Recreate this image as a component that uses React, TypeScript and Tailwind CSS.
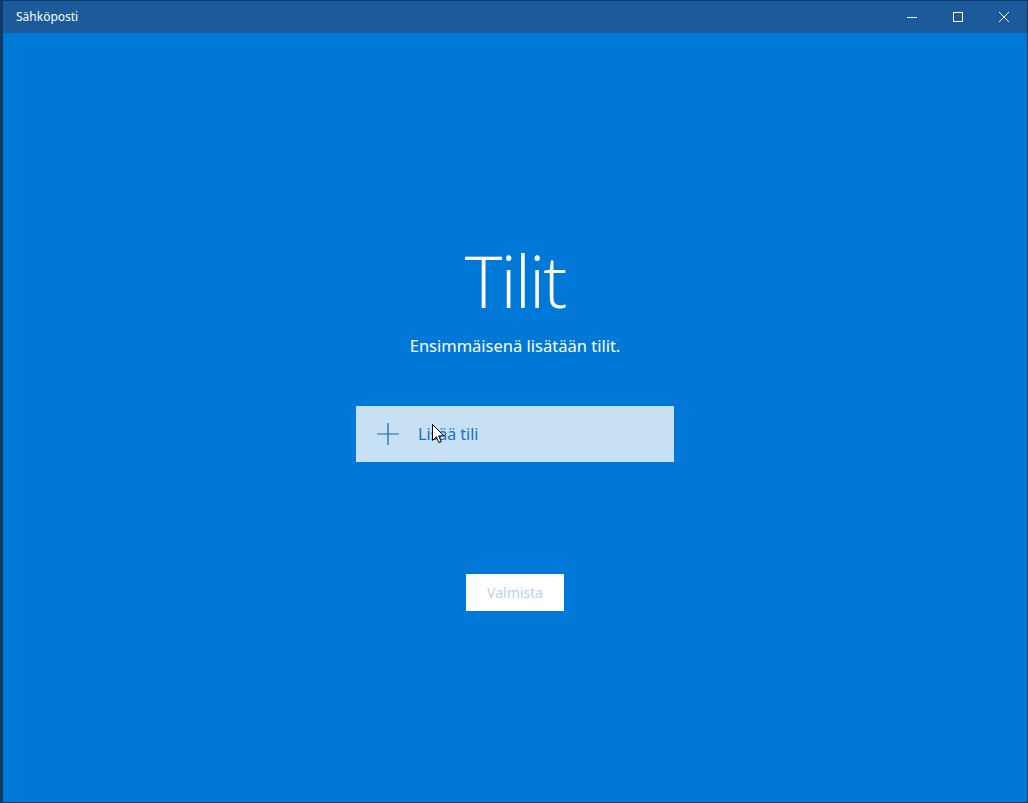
import React from "react";

export default function App() {
  const ui = { fontFamily: '"Segoe UI", "Noto Sans", "Open Sans", sans-serif' };
  return (
    <div className="w-[1028px] h-[803px] bg-[#0f3a66] pl-[3px] pr-[1px] pt-[1px] pb-[1px] flex flex-col" style={ui}>
      <div className="h-[32px] bg-[#1b5a9b] flex items-center shrink-0">
        <div className="pl-[13px] text-[12px] text-white flex-1">Sähköposti</div>
        <div className="flex h-full">
          <div className="w-[46px] h-full flex items-center justify-center">
            <svg width="12" height="12" viewBox="0 0 12 12"><path d="M1 6.5H11" stroke="white" strokeWidth="1" /></svg>
          </div>
          <div className="w-[46px] h-full flex items-center justify-center">
            <svg width="12" height="12" viewBox="0 0 12 12"><rect x="1.5" y="1.5" width="9" height="9" fill="none" stroke="white" strokeWidth="1" /></svg>
          </div>
          <div className="w-[46px] h-full flex items-center justify-center">
            <svg width="12" height="12" viewBox="0 0 12 12"><path d="M1 1L11 11M11 1L1 11" stroke="white" strokeWidth="1" /></svg>
          </div>
        </div>
      </div>
      <div className="flex-1 bg-[#0078d7] flex flex-col items-center">
        <div className="mt-[201px] text-[72px] leading-[92px] tracking-[-2px] text-white font-light" style={{ fontFamily: '"Segoe UI Light", "Open Sans", "Noto Sans", sans-serif', fontWeight: 300 }}>Tilit</div>
        <div className="mt-[9px] text-[16.5px] leading-[22px] text-white">Ensimmäisenä lisätään tilit.</div>
        <div className="relative mt-[49px] w-[318px] h-[56px] bg-[#c7e0f4] flex items-center pl-[21px]">
          <svg width="22" height="22" viewBox="0 0 22 22"><path d="M11 0V22M0 11H22" stroke="#0e64b4" strokeWidth="1.2" /></svg>
          <span className="ml-[19px] text-[16px] text-[#1570c4]">Lisää tili</span>
          <svg className="absolute left-[76px] top-[18px]" width="13" height="20" viewBox="0 0 13 20">
            <path d="M0.5 0.5V16.5L4.3 12.8L6.8 18.6L9.2 17.6L6.7 11.9H12L0.5 0.5Z" fill="white" stroke="black" strokeWidth="1" strokeLinejoin="round" />
          </svg>
        </div>
        <div className="mt-[112px] w-[98px] h-[37px] bg-white flex items-center justify-center text-[14px] text-[#b6d4ef]">Valmista</div>
      </div>
    </div>
  );
}
